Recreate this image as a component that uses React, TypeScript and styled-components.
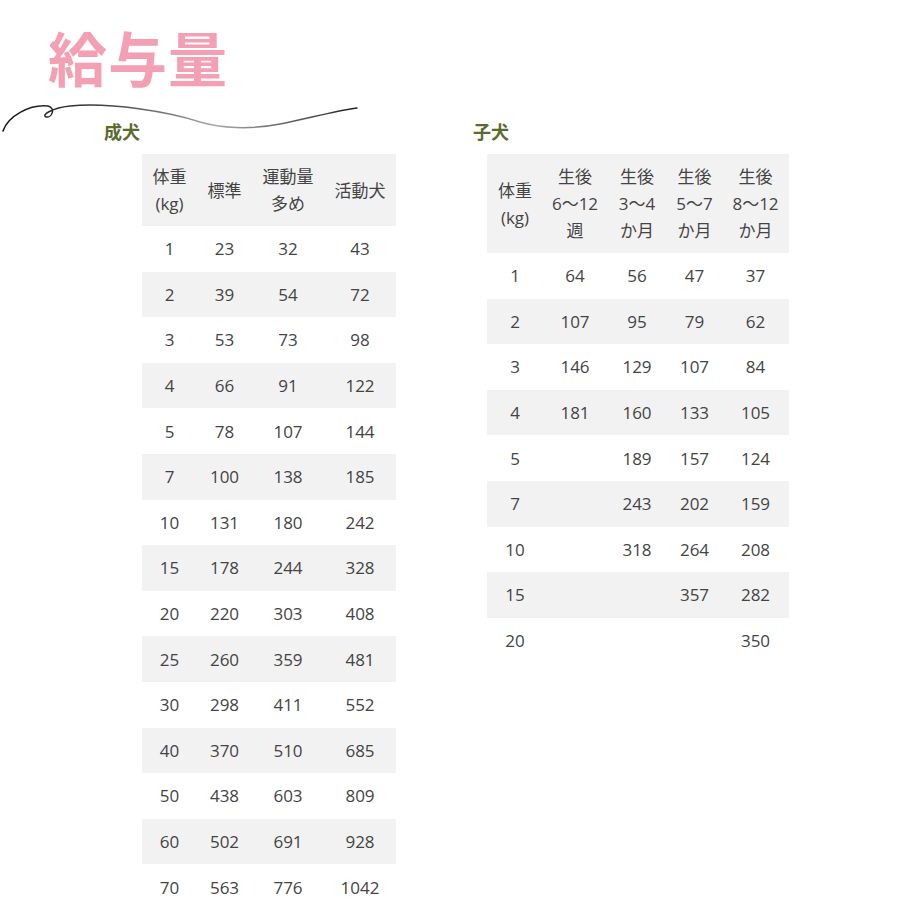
import React from 'react';
import styled, { createGlobalStyle } from 'styled-components';

const GlobalStyle = createGlobalStyle`
  body {
    margin: 0;
    background: #fff;
    font-family: "Open Sans", "Noto Sans CJK JP", sans-serif;
  }
`;

const Page = styled.div`
  position: relative;
  width: 900px;
  height: 900px;
  overflow: hidden;
`;

const Title = styled.h1`
  margin: 0;
  padding: 22px 0 0 48px;
  height: 72px;
  line-height: 70px;
  font-family: "Noto Sans CJK JP", sans-serif;
  font-weight: 700;
  font-size: 59px;
  letter-spacing: 1px;
  color: #f59fb4;
`;

const Swirl = styled.svg`
  position: absolute;
  left: 0;
  top: 98px;
  pointer-events: none;
`;

const Columns = styled.div`
  display: flex;
  margin-top: 25px;
`;

const Section = styled.section<{ $left: number; $width: number }>`
  padding-left: ${p => p.$left}px;
  width: ${p => p.$width}px;
  box-sizing: border-box;
`;

const Heading = styled.h2`
  margin: 0 0 11px;
  font-family: "Noto Sans CJK JP", sans-serif;
  font-size: 18px;
  line-height: 24px;
  font-weight: 700;
  color: #5b6b2e;
`;

const Table = styled.table<{ $indent: number }>`
  margin-left: ${p => p.$indent}px;
  border-collapse: collapse;
  table-layout: fixed;
  color: #444;
  font-size: 17px;
  line-height: 27px;

  th {
    font-weight: 400;
    background: #f2f2f2;
    padding: 9px 0;
    text-align: center;
    font-family: "Open Sans", "Noto Sans CJK JP", sans-serif;
  }

  td {
    padding: 0;
    height: 45.6px;
    text-align: center;
  }

  tbody tr:nth-child(even) td {
    background: #f2f2f2;
  }
`;

const Col = styled.col<{ $w: number }>`
  width: ${p => p.$w}px;
`;

const adult = [
  [1, 23, 32, 43],
  [2, 39, 54, 72],
  [3, 53, 73, 98],
  [4, 66, 91, 122],
  [5, 78, 107, 144],
  [7, 100, 138, 185],
  [10, 131, 180, 242],
  [15, 178, 244, 328],
  [20, 220, 303, 408],
  [25, 260, 359, 481],
  [30, 298, 411, 552],
  [40, 370, 510, 685],
  [50, 438, 603, 809],
  [60, 502, 691, 928],
  [70, 563, 776, 1042],
];

const puppy: (number | null)[][] = [
  [1, 64, 56, 47, 37],
  [2, 107, 95, 79, 62],
  [3, 146, 129, 107, 84],
  [4, 181, 160, 133, 105],
  [5, null, 189, 157, 124],
  [7, null, 243, 202, 159],
  [10, null, 318, 264, 208],
  [15, null, null, 357, 282],
  [20, null, null, null, 350],
];

const lines = (s: string) =>
  s.split('\n').map((l, i) => (
    <React.Fragment key={i}>
      {i > 0 && <br />}
      {l}
    </React.Fragment>
  ));

export default function App() {
  return (
    <Page>
      <GlobalStyle />
      <Title>給与量</Title>
      <Swirl width="370" height="40" viewBox="0 98 370 40">
        <defs>
          <linearGradient id="ink" x1="0" x2="1" y1="0" y2="0">
            <stop offset="0" stopColor="#111" />
            <stop offset="0.3" stopColor="#444" />
            <stop offset="0.6" stopColor="#aaa" />
            <stop offset="1" stopColor="#222" />
          </linearGradient>
        </defs>
        <path
          d="M3 131 C 8 116, 30 104, 48 106 C 56 108, 52 118, 46 117 C 41 115, 52 108, 70 106 C 110 102, 170 112, 200 122 C 220 128, 250 130, 280 124 C 310 118, 335 111, 357 108"
          fill="none"
          stroke="url(#ink)"
          strokeWidth="1.5"
          strokeLinecap="round"
        />
      </Swirl>
      <Columns>
        <Section $left={104} $width={473}>
          <Heading>成犬</Heading>
          <Table $indent={38}>
            <colgroup>
              <Col $w={55} />
              <Col $w={55} />
              <Col $w={72} />
              <Col $w={72} />
            </colgroup>
            <thead>
              <tr>
                <th>{lines('体重\n(kg)')}</th>
                <th>標準</th>
                <th>{lines('運動量\n多め')}</th>
                <th>活動犬</th>
              </tr>
            </thead>
            <tbody>
              {adult.map(r => (
                <tr key={r[0]}>
                  {r.map((v, i) => (
                    <td key={i}>{v}</td>
                  ))}
                </tr>
              ))}
            </tbody>
          </Table>
        </Section>
        <Section $left={0} $width={427}>
          <Heading>子犬</Heading>
          <Table $indent={14}>
            <colgroup>
              <Col $w={56} />
              <Col $w={64} />
              <Col $w={60} />
              <Col $w={55} />
              <Col $w={67} />
            </colgroup>
            <thead>
              <tr>
                <th>{lines('体重\n(kg)')}</th>
                <th>{lines('生後\n6〜12\n週')}</th>
                <th>{lines('生後\n3〜4\nか月')}</th>
                <th>{lines('生後\n5〜7\nか月')}</th>
                <th>{lines('生後\n8〜12\nか月')}</th>
              </tr>
            </thead>
            <tbody>
              {puppy.map(r => (
                <tr key={r[0] as number}>
                  {r.map((v, i) => (
                    <td key={i}>{v ?? ''}</td>
                  ))}
                </tr>
              ))}
            </tbody>
          </Table>
        </Section>
      </Columns>
    </Page>
  );
}
